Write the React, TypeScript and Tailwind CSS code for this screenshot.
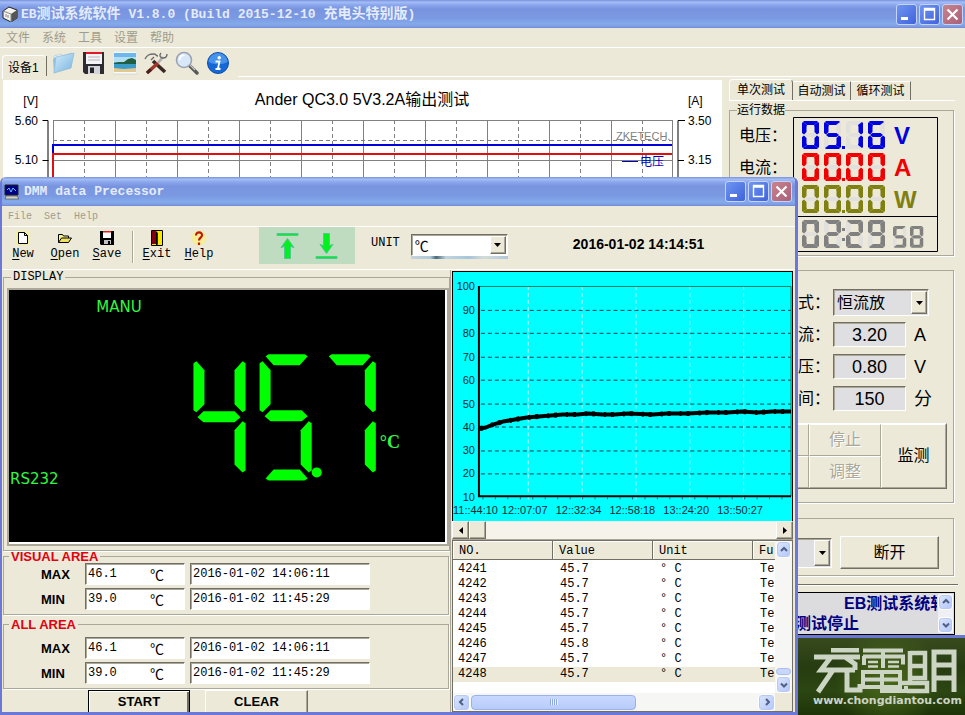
import React from "react";

const SANS = "font-['Liberation_Sans','Noto_Sans_CJK_SC',sans-serif]";
const MONO = "font-['Liberation_Mono','Noto_Sans_CJK_SC',monospace]";
const TITLE_BG =
  "bg-[linear-gradient(to_bottom,#7b93dc_0%,#a3bdf6_8%,#8aa6ec_18%,#7994df_32%,#7b99e2_65%,#83abea_85%,#7f9fe4_94%,#7484d6_100%)]";
const RAISED =
  "border border-t-white border-l-white border-r-[#716f64] border-b-[#716f64] shadow-[inset_-1px_-1px_0_#aca899]";
const SUNKEN =
  "border border-t-[#716f64] border-l-[#716f64] border-r-white border-b-white shadow-[inset_1px_1px_0_#aca899]";
const GROUP = "border border-[#aca899] shadow-[1px_1px_0_#ffffff]";

/* ---------- window chrome ---------- */

function CaptionButton({ kind }: { kind: "min" | "max" | "close" }) {
  const tone =
    kind === "close"
      ? "bg-[linear-gradient(135deg,#c9838c,#a8607a)]"
      : "bg-[linear-gradient(135deg,#6f96f0,#3f62dc)]";
  const label = kind === "min" ? "Minimize" : kind === "max" ? "Maximize" : "Close";
  return (
    <button aria-label={label} className={`size-[21px] rounded-[3px] border border-[#c4d3f8] ${tone}`}>
      <svg viewBox="0 0 19 19" className="size-[19px]" fill="none" stroke="#fff">
        {kind === "min" && <path d="M4 13.5h7" strokeWidth="3" />}
        {kind === "max" && <path d="M4.5 14.5v-11h10v11zM4 5h11" strokeWidth="1.4" />}
        {kind === "close" && <path d="M4.5 4.5l10 10M14.5 4.5l-10 10" strokeWidth="2.2" />}
      </svg>
    </button>
  );
}

function CaptionButtons() {
  return (
    <div className="ml-auto flex gap-[2px]">
      <CaptionButton kind="min" />
      <CaptionButton kind="max" />
      <CaptionButton kind="close" />
    </div>
  );
}

/* ---------- seven segment digits ---------- */

const SEGMENTS: Record<string, string> = {
  "0": "abcdef", "1": "bc", "2": "abged", "5": "afgcd", "6": "afgcde", "8": "abcdefg", "9": "abfgcd",
};
const SMALL: Record<string, string> = {
  a: "1,1 2,0 15,0 16,1 12,4 5,4",
  f: "0,2 1,1 5,4 4.500,6 4.500,11 2,13.5 0,12",
  b: "17,2 16,1 12,4 12.500,6 12.500,11 15,13.5 17,12",
  e: "0,26 1,27 5,24 4.500,22 4.500,17 2,14.5 0,16",
  c: "17,26 16,27 12,24 12.500,22 12.500,17 15,14.5 17,16",
  d: "1,27 2,28 15,28 16,27 12,24 5,24",
  g: "2,14 4.500,12 12.500,12 15,14 12.500,16 4.500,16",
};

function Digit({ n, x, y, color, scale = 1 }: { n: string; x: number; y: number; color: string; scale?: number }) {
  const on = SEGMENTS[n];
  const off = Object.keys(SMALL).filter((s) => !on.includes(s));
  return (
    <g transform={`translate(${x} ${y}) scale(${scale})`}>
      {off.map((s) => <polygon key={s} points={SMALL[s]} fill="#e1e0dc" />)}
      {on.split("").map((s) => <polygon key={s} points={SMALL[s]} fill={color} />)}
    </g>
  );
}

function DigitRow({ value, y, color, unit }: { value: string; y: number; color: string; unit: string }) {
  return (
    <g>
      {value.split("").map((n, i) => (
        <Digit key={i} n={n} x={9 + i * 22} y={y} color={color} />
      ))}
      <rect x="49" y={y + 25} width="3" height="3" fill={color} />
      <text x="101" y={y + 23} fontSize="24" fontWeight="bold" fill={color}>{unit}</text>
    </g>
  );
}

function Meter() {
  return (
    <svg viewBox="0 0 146 136" className={`mt-px h-[136px] w-[146px] ${SANS}`} role="img" aria-label="05.16 V, 00.00 A, 00.00 W, 02:29 58">
      <path d="M.5.5h144v134H.5zM0 99.5h145" fill="none" stroke="#000" />
      <DigitRow value="0516" y={4} color="#0000e0" unit="V" />
      <DigitRow value="0000" y={36} color="#f00000" unit="A" />
      <DigitRow value="0000" y={68} color="#808010" unit="W" />
      {["0", "2", "2", "9"].map((n, i) => (
        <Digit key={i} n={n} x={9 + i * 22} y={103} color="#808080" />
      ))}
      <rect x="49" y="111" width="3" height="3" fill="#808080" />
      <rect x="49" y="121" width="3" height="3" fill="#808080" />
      <Digit n="5" x={100} y={109} color="#808080" scale={0.78} />
      <Digit n="8" x={117} y={109} color="#808080" scale={0.78} />
    </svg>
  );
}

/* ---------- main window toolbar icons ---------- */

function ToolIcon({ name, children }: { name: string; children: React.ReactNode }) {
  return (
    <button aria-label={name} className="size-6">
      <svg viewBox="0 0 24 24" className="size-6">{children}</svg>
    </button>
  );
}

function MainToolbar() {
  return (
    <div className="flex h-8 border-t border-white">
      <div className="mt-[7px] ml-[2px] flex h-6 w-[44px] items-center rounded-t-sm border-t border-l border-white border-r-[#716f64] pl-[5px] text-xs">
        设备1
      </div>
      <div className="mt-2 h-5 w-px bg-[#716f64]" />
      <div className="mt-[3px] ml-1 flex gap-[7px]">
        <ToolIcon name="打开">
          <defs>
            <linearGradient id="folder" x1="0" y1="0" x2="1" y2="1">
              <stop offset="0" stopColor="#d4ecfa" /><stop offset="1" stopColor="#78b4e0" />
            </linearGradient>
          </defs>
          <path d="M3 5l7-2 2 2 9-3v3L3 8z" fill="#e8f2f8" stroke="#a8c4d8" strokeWidth=".6" />
          <path d="M5 6l18-4-3 15L3 22z" fill="url(#folder)" stroke="#8ab8d8" strokeWidth=".7" />
          <path d="M3 22L2 8l3-2" fill="#8fc0e4" />
        </ToolIcon>
        <ToolIcon name="保存">
          <path d="M1 1h21v22H3l-2-2z" fill="#2c2c34" />
          <path d="M4 1h16v12H4z" fill="#f4f4f4" />
          <path d="M4 1h16v2H4z" fill="#e01828" />
          <path d="M6 6h12M6 9h12" stroke="#b8b8c0" />
          <path d="M6 15h12v8H6z" fill="#d4d4d8" />
          <path d="M8 16.5h4V22H8z" fill="#24242a" />
        </ToolIcon>
        <ToolIcon name="图片">
          <path d="M0 0h24v23H0z" fill="#f8fafa" stroke="#c8ccc8" strokeWidth=".6" />
          <path d="M1 2h22v10H1z" fill="#6cb8ec" />
          <path d="M1 6h22v5H1z" fill="#b4def4" />
          <path d="M1 12l5-1 5 0 4-3 4-1 4 2v4H1z" fill="#206040" />
          <path d="M1 13h22v6H1z" fill="#3a9cc8" />
          <path d="M1 17l10 1 12-1v4H1z" fill="#e0c890" />
        </ToolIcon>
        <ToolIcon name="工具">
          <path d="M9 10l12 11" stroke="#3a2824" strokeWidth="3.600" />
          <path d="M14 12L3 22" stroke="#a03828" strokeWidth="3.600" />
          <path d="M3 22l4-3.600" stroke="#402020" strokeWidth="3" />
          <path d="M14 12l5-6" stroke="#b0b0b0" strokeWidth="2.600" />
          <path d="M1 8c2-4 4-5 9-5 2 0 2 2 4 2M17 2c-2 2-1 5 2 5s4-1 4-4M7 9l3-3" fill="none" stroke="#6c6c6c" strokeWidth="1.400" />
        </ToolIcon>
        <ToolIcon name="查找">
          <path d="M15 15l7 7" stroke="#585858" strokeWidth="3.400" strokeLinecap="round" />
          <path d="M15 14l5 5" stroke="#c8c8c8" strokeWidth="1.200" />
          <circle cx="9" cy="9" r="7.500" fill="#d8e8f8" stroke="#98a4b4" strokeWidth="1.600" />
          <path d="M4.500 9a5 5 0 0 1 5-5" fill="none" stroke="#fff" strokeWidth="2" />
        </ToolIcon>
        <ToolIcon name="关于">
          <circle cx="12" cy="12" r="10.500" fill="#1668d8" stroke="#104ca8" />
          <path d="M2.500 11a9.500 9 0 0 1 19 0c-6 3-13 3-19 0z" fill="#5ca4f4" opacity=".7" />
          <circle cx="13.200" cy="6.800" r="1.700" fill="#fff" />
          <path d="M9.500 10.500h4l-1.600 7h2M9.500 18h5" stroke="#fff" strokeWidth="1.800" fill="none" />
        </ToolIcon>
      </div>
      <div className="mt-7 ml-2 h-px flex-1 bg-white" />
    </div>
  );
}

/* ---------- voltage / current chart ---------- */

function VoltageChart() {
  const cols = Array.from({ length: 20 }, (_, i) => i);
  return (
    <svg viewBox="0 0 719 555" className={`block w-full ${SANS}`}>
      <text x="359" y="25" fontSize="16" textAnchor="middle">Ander QC3.0 5V3.2A输出测试</text>
      <g fontSize="12">
        <text x="35" y="25" textAnchor="end">[V]</text>
        <text x="685" y="25">[A]</text>
        <text x="35" y="45" textAnchor="end">5.60</text>
        <text x="35" y="84" textAnchor="end">5.10</text>
        <text x="685" y="45">3.50</text>
        <text x="685" y="84">3.15</text>
      </g>
      <g stroke="#808080" fill="none">
        {cols.map((i) => (
          <path key={i} d={`M${50.5 + i * 31} 40V500`} strokeDasharray={i % 2 ? "4 3" : undefined} />
        ))}
        <path d="M50 40.500H670M50 80.500H670M669.500 40V500" />
        <path d="M50 60.500H670" strokeDasharray="4 3" />
      </g>
      <path d="M39.500 40.500h5.500v460M39.500 80.500h6M682 40.500h-7v460M675 80.500h6" fill="none" stroke="#000" />
      <path d="M50 500V65H669" fill="none" stroke="#0000d8" strokeWidth="2" />
      <path d="M50 500V74H669" fill="none" stroke="#e01010" strokeWidth="2" />
      <text x="613" y="60" fontSize="11" fill="#808080">ZKETECH.</text>
      <path d="M619 81.500h16" stroke="#0000c0" />
      <text x="637" y="86" fontSize="12" fill="#0000c0">电压</text>
    </svg>
  );
}

/* ---------- right control panel ---------- */

function DropArrow() {
  return (
    <span className={`pointer-events-none flex w-4 items-center justify-center bg-[#ece9d8] ${RAISED}`}>
      <svg viewBox="0 0 7 4" className="h-1 w-[7px]"><path d="M0 0h7L3.500 4z" /></svg>
    </span>
  );
}

function Setting({ label, value, unit }: { label: string; value: string; unit: string }) {
  return (
    <div className="flex h-[27px] items-center">
      <label htmlFor={label} className="w-[100px] text-right text-base">{label}：</label>
      <input id={label} defaultValue={value} className={`ml-[3px] h-[25px] w-[73px] bg-[#dfdfe1] text-center text-lg ${SUNKEN}`} />
      <span className="ml-2 text-lg leading-none">{unit}</span>
    </div>
  );
}

function BlueArrow({ dir, className = "" }: { dir: "up" | "down" | "left" | "right"; className?: string }) {
  const d = { up: "M3 7l3-3 3 3", down: "M3 4.500l3 3 3-3", left: "M7 3L4 6l3 3", right: "M5 3l3 3-3 3" }[dir];
  return (
    <button aria-label={dir} className={`flex shrink-0 items-center justify-center rounded-sm border border-white bg-[linear-gradient(135deg,#dce6fe,#b2c6f8)] shadow-[inset_0_0_0_1px_#b8c9f2] ${className}`}>
      <svg viewBox="0 0 12 12" className="size-3" fill="none" stroke="#4d6185" strokeWidth="2"><path d={d} /></svg>
    </button>
  );
}

const PUSH = `border border-t-white border-l-white border-r-[#aca899] border-b-[#aca899]`;

function ControlPanel() {
  return (
    <aside className="w-[243px] shrink-0 pr-[10px] pl-[7px]">
      <div className="flex h-[21px] items-end border-b border-white text-xs" role="tablist">
        <button role="tab" className="h-[21px] w-[64px] rounded-t-sm border-t border-r border-l border-t-white border-r-[#716f64] border-l-white">单次测试</button>
        <button role="tab" className="h-[19px] w-[58px] border-t border-r border-t-white border-r-[#716f64]">自动测试</button>
        <button role="tab" className="h-[19px] w-[60px] border-t border-r border-t-white border-r-[#716f64]">循环测试</button>
      </div>

      <fieldset className={`mt-[3px] mr-px ${GROUP}`}>
        <legend className="ml-[7px] h-3 text-xs leading-3">运行数据</legend>
        <div className="flex pb-[2px]">
          <div className="w-[63px] shrink-0 pt-1 pl-[9px] text-base leading-8 whitespace-nowrap">
            <p>电压：</p>
            <p>电流：</p>
            <p>功率：</p>
            <p>时间：</p>
          </div>
          <Meter />
        </div>
      </fieldset>

      <fieldset aria-label="设置" className={`mt-[14px] mr-px ${GROUP}`}>
        <div className="flex flex-col gap-[5px] pt-[18px]">
          <div className="flex h-[27px] items-center">
            <label htmlFor="mode" className="w-[100px] text-right text-base">模式：</label>
            <div className={`ml-[3px] flex h-[27px] w-[96px] bg-[#dfdfe1] p-px ${SUNKEN}`}>
              <select id="mode" className="min-w-0 flex-1 appearance-none pl-[2px] text-base leading-none">
                <option>恒流放</option>
              </select>
              <DropArrow />
            </div>
          </div>
          <Setting label="电流" value="3.20" unit="A" />
          <Setting label="电压" value="0.80" unit="V" />
          <Setting label="时间" value="150" unit="分" />
        </div>
        <div className="mt-[11px] mr-[6px] mb-[13px] ml-2 grid h-[66px] grid-cols-[70px_72px_1fr] grid-rows-2 border border-t-white border-l-white border-r-[#716f64] border-b-[#716f64] text-base">
          <button className={PUSH}>开始</button>
          <button className={`${PUSH} text-[#aca899] [text-shadow:1px_1px_0_#ffffff]`}>停止</button>
          <button className={`row-span-2 ${PUSH}`}>监测</button>
          <button className={PUSH}>继续</button>
          <button className={`${PUSH} text-[#aca899] [text-shadow:1px_1px_0_#ffffff]`}>调整</button>
        </div>
      </fieldset>

      <fieldset aria-label="连接" className={`mt-[15px] mr-px ${GROUP}`}>
        <div className="flex items-center pt-[17px] pr-[14px] pb-[6px] pl-2">
          <div className={`flex h-[30px] w-[94px] bg-[#dfdfe1] p-px ${SUNKEN}`}>
            <select aria-label="端口" className="min-w-0 flex-1 appearance-none text-xs">
              <option>COM3</option>
            </select>
            <DropArrow />
          </div>
          <button className={`ml-2 h-[33px] flex-1 text-base ${RAISED}`}>断开</button>
        </div>
      </fieldset>

      <div className="mt-2 -mr-[3px] h-[2px] border-t border-b border-t-[#716f64] border-b-white" />
      <div className="mt-[6px] flex h-[43px] border border-black bg-[#dcdcdf] p-px">
        <div className="min-w-0 flex-1 overflow-hidden pl-16 text-base leading-5 font-bold whitespace-nowrap text-[#000080]">
          <p className="pl-[49px]">EB测试系统软件</p>
          <p>测试停止</p>
        </div>
        <div className="ml-px flex flex-col justify-between bg-[#f0f0f4]">
          <BlueArrow dir="up" className="h-4 w-[15px]" />
          <BlueArrow dir="down" className="h-4 w-[15px]" />
        </div>
      </div>
    </aside>
  );
}

function MainWindow() {
  return (
    <section className={`absolute inset-x-0 top-0 border-b-[3px] border-[#6b78d2] bg-[#ece9d8] ${SANS}`}>
      <header className={`flex h-7 items-center pr-[2px] pl-[2px] font-bold text-[#e4ebfb] ${TITLE_BG}`}>
        <svg viewBox="0 0 16 16" className="mr-[3px] size-4">
          <path d="M1 5l6-4 8 3v8l-6 4-8-4z" fill="#f4f4ec" stroke="#222" />
          <path d="M9 8l6-4v8l-6 4z" fill="#555" />
          <path d="M1 5l8 3v8M4 8v3M6 9v3" stroke="#888" fill="none" />
        </svg>
        <h1 className={`text-[13px] whitespace-pre ${MONO}`}>
          EB<span className="text-sm">测试系统软件</span> V1.8.0 (Build 2015-12-10 <span className="text-sm">充电头特别版</span>)
        </h1>
        <CaptionButtons />
      </header>
      <nav className="flex h-[19px] items-center gap-3 pl-[6px] text-xs text-[#a09c8c]">
        {["文件", "系统", "工具", "设置", "帮助"].map((m) => (
          <button key={m}>{m}</button>
        ))}
      </nav>
      <MainToolbar />
      <div className="flex items-stretch pt-px">
        <div className="ml-[3px] h-[554px] min-w-0 flex-1 overflow-hidden bg-white">
          <VoltageChart />
        </div>
        <ControlPanel />
      </div>
    </section>
  );
}

/* ---------- DMM window ---------- */

function DmmTool({ label, children }: { label: string; children: React.ReactNode }) {
  return (
    <button className={`flex w-[42px] flex-col items-center text-xs leading-4 ${MONO}`}>
      <svg viewBox="0 0 16 16" className="size-4">{children}</svg>
      <span><u className="underline-offset-2">{label[0]}</u>{label.slice(1)}</span>
    </button>
  );
}

function DmmToolbar() {
  return (
    <div className="flex h-11 border-t border-b border-white">
      <div className="flex pt-[3px]">
        <DmmTool label="New">
          <path d="M1 1h13v14H1z" fill="#f8f480" opacity=".6" />
          <path d="M3.500 2.500h6l3 3v8h-9zM9.500 2.500v3h3" fill="#fff" stroke="#000" />
        </DmmTool>
        <DmmTool label="Open">
          <path d="M1.500 12.500v-8h4l1 1.500h5v2" fill="#f8f490" stroke="#000" />
          <path d="M1.500 12.500l3-4.500h10l-3 4.500z" fill="#f0e060" stroke="#000" />
        </DmmTool>
        <DmmTool label="Save">
          <path d="M1 1h14v14H2l-1-1z" fill="#000" />
          <path d="M4 2h8v6H4z" fill="#fff" /><path d="M4 1h8v1.500H4z" fill="#e02020" />
          <path d="M5 10h7v4H5z" fill="#c0c0c0" /><path d="M9 11h2v3H9z" />
        </DmmTool>
        <div className="mr-[2px] ml-1 mt-px h-8 w-[2px] border-r border-l border-r-white border-l-[#aca899]" />
        <DmmTool label="Exit">
          <path d="M2.500.5h11v15h-11z" fill="#f8e800" stroke="#000" />
          <path d="M3 1h4l2 2v12l-2-1H3z" fill="#800010" /><path d="M7.500 2v13" stroke="#000" />
        </DmmTool>
        <DmmTool label="Help">
          <circle cx="8" cy="8" r="7.500" fill="#f8f080" opacity=".7" />
          <path d="M5 5.500c0-4.500 6.500-4 6 0-.3 2-3 2.500-3 5M8 12.500v2.500" fill="none" stroke="#c01808" strokeWidth="2.200" />
        </DmmTool>
      </div>
      <div className="ml-[39px] flex h-[37px] w-24 items-center justify-center gap-4 bg-[#c0dcc0]">
        <button aria-label="Scale up">
          <svg viewBox="0 0 23 28" className="h-7 w-[23px]">
            <path d="M1 1.500h21v2H1zM8.500 26.500V14.500L5 15.500l6.500-9 6.500 9-3.500-1v12z" fill="#00f020" stroke="#50c890" />
          </svg>
        </button>
        <button aria-label="Scale down">
          <svg viewBox="0 0 23 28" className="h-7 w-[23px]">
            <path d="M1 24.500h21v2H1zM8.500 1.500v12l-3.500-1 6.500 9 6.500-9-3.500 1v-12z" fill="#00f020" stroke="#50c890" />
          </svg>
        </button>
      </div>
      <label htmlFor="unit" className={`mt-2 ml-4 text-xs ${MONO}`}>UNIT</label>
      <div className="mt-[7px] ml-[11px] w-[97px]">
        <div className={`flex h-[22px] bg-white p-px ${SUNKEN}`}>
          <select id="unit" className="min-w-0 flex-1 appearance-none pt-[2px] pl-[2px] text-sm leading-none"><option>℃</option></select>
          <DropArrow />
        </div>
        <div className="h-[3px] bg-[linear-gradient(to_right,#c4d4dc,#b0c8d8_20%,#486880_26%,#c0d4e0_36%,#a8c4dc_60%,#d4dcd8_75%,#b0c8dc)]" />
      </div>
      <time className="mt-[7px] ml-[65px] text-sm font-bold whitespace-nowrap">2016-01-02 14:14:51</time>
    </div>
  );
}

const upright = (x: number, y: number, side: "l" | "r") =>
  side === "l"
    ? `${x + 3},${y} ${x + 11},${y + 9} ${x + 11},${y + 43} ${x + 3},${y + 51} ${x},${y + 49} ${x},${y + 2}`
    : `${x + 8},${y} ${x},${y + 9} ${x},${y + 43} ${x + 8},${y + 51} ${x + 11},${y + 49} ${x + 11},${y + 2}`;
const topBar = (x: number, y: number) =>
  `${x},${y + 2} ${x + 3},${y} ${x + 39},${y} ${x + 42},${y + 2} ${x + 34},${y + 11} ${x + 8},${y + 11}`;
const bottomBar = (x: number, y: number) =>
  `${x},${y + 9} ${x + 8},${y} ${x + 34},${y} ${x + 42},${y + 9} ${x + 39},${y + 11} ${x + 3},${y + 11}`;
const midBar = (x: number, y: number) =>
  `${x},${y + 6} ${x + 6},${y} ${x + 37},${y} ${x + 43},${y + 6} ${x + 37},${y + 11} ${x + 6},${y + 11}`;

const READOUT = [
  upright(184, 71, "l"), upright(225, 71, "r"), midBar(188, 121), upright(225, 131, "r"),
  upright(250, 71, "l"), topBar(256, 64), midBar(255, 120), upright(291, 131, "r"), bottomBar(256, 179),
  topBar(319, 64), upright(355, 71, "r"), upright(355, 131, "r"),
];

function Display() {
  return (
    <fieldset className={`mt-px ml-px pb-1 pl-[3px] ${GROUP}`}>
      <legend className={`ml-1 h-3 px-[2px] text-xs leading-3 ${MONO}`}>DISPLAY</legend>
      <div className="mt-[5px] border-2 border-[#aca899] bg-white pr-[2px] pb-[2px]">
        <svg viewBox="0 0 435 251" className="block w-full bg-black" fill="#00ff00" role="img" aria-label="45.7 °C">
          {READOUT.map((p, i) => <polygon key={i} points={p} />)}
          <circle cx="307" cy="182" r="5" />
          <g fill="#30f840" className="font-['DejaVu_Sans',sans-serif]" fontSize="15">
            <text x="87" y="22">MANU</text>
            <text x="1" y="194">RS232</text>
          </g>
          <text x="370" y="158" fontSize="18" fontWeight="bold" fill="#30f840" className="font-['Liberation_Serif',serif]">°C</text>
        </svg>
      </div>
    </fieldset>
  );
}

function Extreme({ id, label, value, time }: { id: string; label: string; value: string; time: string }) {
  return (
    <div className="flex h-[22px] items-center">
      <label htmlFor={id} className="w-[44px] pt-[2px] text-[13px] font-bold">{label}</label>
      <div className={`flex h-[22px] w-[100px] bg-white ${SUNKEN}`}>
        <input id={id} defaultValue={value} className={`min-w-0 flex-1 pl-[2px] text-xs ${MONO}`} />
        <span className="w-[34px] pt-px text-sm leading-5">℃</span>
      </div>
      <input aria-label={`${id} time`} defaultValue={time} className={`ml-[5px] h-[22px] w-[180px] bg-white pl-[2px] text-xs ${MONO} ${SUNKEN}`} />
    </div>
  );
}

function Area({ id, title, className }: { id: string; title: string; className: string }) {
  return (
    <fieldset className={`mr-px ml-px pl-[37px] ${GROUP} ${className}`}>
      <legend className="-ml-8 h-3 px-[2px] text-[13px] leading-3 font-bold text-[#e00010]">{title}</legend>
      <div className="flex flex-col gap-[3px]">
        <Extreme id={`${id}-max`} label="MAX" value="46.1" time="2016-01-02 14:06:11" />
        <Extreme id={`${id}-min`} label="MIN" value="39.0" time="2016-01-02 11:45:29" />
      </div>
    </fieldset>
  );
}

const CURVE: [number, number][] = [
  [27, 158], [33, 157], [40, 154], [50, 151], [62, 149], [74, 147], [86, 146], [98, 145], [110, 144], [125, 144], [135, 143],
  [150, 144], [162, 144], [176, 143], [200, 144], [215, 143], [235, 143], [255, 142], [275, 142], [290, 141], [305, 142], [320, 141], [339, 141],
];

function TemperatureChart() {
  const times = ["11::44:10", "12::07:07", "12::32:34", "12::58:18", "13::24:20", "13::50:27"];
  const left = [0, 49, 103, 157, 211, 265];
  return (
    <svg viewBox="0 0 340 251" className={`block w-full bg-[#00ffff] ${SANS}`} fontSize="11">
      <path d="M0 .500H340" stroke="#000" />
      {[75, 129, 183, 237, 291].map((x) => (
        <path key={x} d={`M${x}.500 15V230`} stroke="#b8f8ff" strokeDasharray="4 3" />
      ))}
      {Array.from({ length: 10 }, (_, i) => (
        <g key={i}>
          <text x="22" y={19 + Math.round(i * 23.5)} textAnchor="end" fill="#002838">{100 - i * 10}</text>
          {i > 0 && i < 9 && (
            <path d={`M28 ${Math.round(15 + i * 23.5)}.5H339`} stroke="#004050" strokeDasharray="4 3" />
          )}
        </g>
      ))}
      <path d="M27 15.500H339V226" fill="none" stroke="#108060" />
      <path d="M26 15V226H339" fill="none" stroke="#000" strokeWidth="2" />
      {Array.from({ length: 25 }, (_, i) => (
        <path key={i} d={`M${30 + i * 12.5} 227v2`} stroke="#206070" />
      ))}
      <polyline points={CURVE.map((p) => p.join(",")).join(" ")} fill="none" stroke="#000" strokeWidth="4" strokeLinejoin="round" />
      <polyline points={CURVE.map((p) => p.join(",")).join(" ")} fill="none" stroke="#000" strokeWidth="5" strokeDasharray="3 9 2 5" />
      {times.map((t, i) => (
        <text key={t} x={left[i]} y="244" fill="#002838">{t}</text>
      ))}
    </svg>
  );
}

function Readings() {
  const rows = [4241, 4242, 4243, 4244, 4245, 4246, 4247, 4248];
  return (
    <div className={`flex min-h-0 flex-1 flex-col border border-[#716f64] bg-white ${MONO}`}>
      <div className="flex min-h-0 flex-1">
        <div className="min-w-0 flex-1 overflow-hidden">
          <table className="w-[400px] table-fixed border-separate border-spacing-0 text-left text-xs leading-[15px]">
            <thead>
              <tr className="bg-[#ece9d8]">
                {["NO.", "Value", "Unit", "Fu"].map((h) => (
                  <th key={h} className="h-[19px] border-r border-b border-[#716f64] pt-[2px] pl-[6px] font-normal shadow-[inset_1px_1px_0_#ffffff]">{h}</th>
                ))}
              </tr>
            </thead>
            <tbody>
              {rows.map((n) => (
                <tr key={n} className="first:*:pt-[2px] last:bg-[#ece9d8]">
                  <td className="pl-[5px]">{n}</td>
                  <td className="pl-[7px]">{n === 4246 ? "45.8" : "45.7"}</td>
                  <td className="pl-[7px]">° C</td>
                  <td className="pl-[7px]">Te</td>
                </tr>
              ))}
            </tbody>
          </table>
        </div>
        <div className="flex w-[17px] flex-col items-center bg-[#f6f6f4]">
          <BlueArrow dir="up" className="h-[17px] w-[15px]" />
          <div className="mt-auto mb-px h-[7px] w-[15px] rounded-sm border border-[#a8bcf0] bg-[#c8d8fc]" />
          <BlueArrow dir="down" className="h-[17px] w-[15px]" />
        </div>
      </div>
      <div className="flex h-[18px] items-center bg-[#f6f6f4]">
        <BlueArrow dir="left" className="size-[17px]" />
        <div className="ml-px flex h-[15px] w-[165px] items-center justify-center gap-px rounded-sm border border-[#98b0ec] bg-[linear-gradient(to_bottom,#c8d8ff,#b8ccfa)]">
          {[0, 1, 2, 3].map((i) => <i key={i} className="h-[6px] w-px bg-[#8ca8e8] shadow-[1px_0_0_#eef4ff]" />)}
        </div>
        <BlueArrow dir="right" className="ml-auto size-[17px]" />
        <div className="h-full w-[17px] bg-[#ece9d8]" />
      </div>
    </div>
  );
}

function DmmWindow() {
  return (
    <section className={`absolute top-[177px] right-[167px] bottom-0 left-0 flex flex-col overflow-hidden rounded-t-md border-r-[3px] border-b-[3px] border-l-2 border-[#6b78d8] bg-[#ece9d8] ${SANS}`}>
      <header className={`-mx-[2px] flex h-[29px] shrink-0 items-center pr-[5px] pl-1 text-[#e4ebfb] ${TITLE_BG}`}>
        <svg viewBox="0 0 16 16" className="mr-1 size-4">
          <path d="M1 1h13v10H1z" fill="#000080" stroke="#222" />
          <path d="M3 6l2-2 2 4 2-4 3 3" fill="none" stroke="#60c0ff" />
          <path d="M2 12h11l2 3H1z" fill="#d0d0c0" stroke="#444" strokeWidth=".6" />
        </svg>
        <h2 className={`text-[13px] font-bold ${MONO}`}>DMM data Precessor</h2>
        <CaptionButtons />
      </header>
      <nav className={`flex h-5 shrink-0 items-center gap-3 pl-[6px] text-[10px] text-[#a09c8c] ${MONO}`}>
        <button>File</button>
        <button>Set</button>
        <button>Help</button>
      </nav>
      <DmmToolbar />
      <div className="flex min-h-0 flex-1">
        <div className="flex w-[448px] shrink-0 flex-col overflow-hidden">
          <Display />
          <Area id="visual" title="VISUAL AREA" className="pb-1" />
          <Area id="all" title="ALL AREA" className="mt-1 pt-[6px] pb-1" />
          <div className="flex pt-px pl-[86px] text-[13px] font-bold">
            <button className="h-[25px] w-[102px] border border-black shadow-[inset_1px_1px_0_#ffffff,inset_-2px_0_0_#716f64]">START</button>
            <button className={`ml-[15px] h-[25px] w-[103px] ${RAISED}`}>CLEAR</button>
          </div>
        </div>
        <div className="flex min-w-0 flex-1 flex-col border-l border-[#aca899] pt-px pr-[2px] pl-px">
          <div className="border-x border-black">
            <TemperatureChart />
          </div>
          <div className="flex h-[19px] shrink-0 border-b border-[#aca899] bg-[#f5f3ea]">
            <button aria-label="Scroll left" className={`flex w-[17px] items-center justify-center bg-[#ece9d8] ${RAISED}`}>
              <svg viewBox="0 0 4 7" className="h-[7px] w-1"><path d="M4 0v7L0 3.500z" /></svg>
            </button>
            <div className={`w-[17px] bg-[#ece9d8] ${RAISED}`} />
            <button aria-label="Scroll right" className={`ml-auto flex w-[17px] items-center justify-center bg-[#ece9d8] ${RAISED}`}>
              <svg viewBox="0 0 4 7" className="h-[7px] w-1"><path d="M0 0v7l4-3.500z" /></svg>
            </button>
          </div>
          <Readings />
        </div>
      </div>
    </section>
  );
}

/* ---------- desktop ---------- */

function Watermark() {
  return (
    <div className="absolute right-2 bottom-2 w-36 text-[#ccd4c4]">
      <svg viewBox="0 0 144 46" className="block w-full" fill="none" stroke="currentColor">
        <path d="M1 9h46M18 2h28M18 9L8 22h34M32 9l10 7v6M20 22L5 44M34 22v20h13v-6" strokeWidth="5" />
        <path d="M50 2.500h40M50 8.500h40v8M51 8v9M70 2v18" strokeWidth="4" />
        <path d="M55 14h10M75 14h11M55 18.500h10M75 18.500h11" strokeWidth="2.500" />
        <path d="M50 24h37v15H50zM50 31.500h37M69 22v21h24v-5" strokeWidth="4" />
        <path d="M97 3v30M97 5h15v25H97M97 18h15M88 35h26v8H94" strokeWidth="4.500" />
        <path d="M121 44V4h20v40M121 17h18M121 30h18" strokeWidth="5" />
      </svg>
      <p className="mt-px font-['DejaVu_Sans','Liberation_Sans',sans-serif] text-[11px] leading-3 font-bold whitespace-nowrap">www.chongdiantou.com</p>
    </div>
  );
}

export default function App() {
  return (
    <main className="relative h-screen min-h-[715px] w-full overflow-hidden bg-[#2c4214] text-black">
      <div className="absolute inset-x-0 bottom-0 h-20 bg-[radial-gradient(circle_at_92%_55%,#4c6a1c_0,transparent_6%),linear-gradient(to_bottom,#3a4c20,#263c10_40%,#2c4612_70%,#1e3408)]" />
      <Watermark />
      <MainWindow />
      <DmmWindow />
    </main>
  );
}
